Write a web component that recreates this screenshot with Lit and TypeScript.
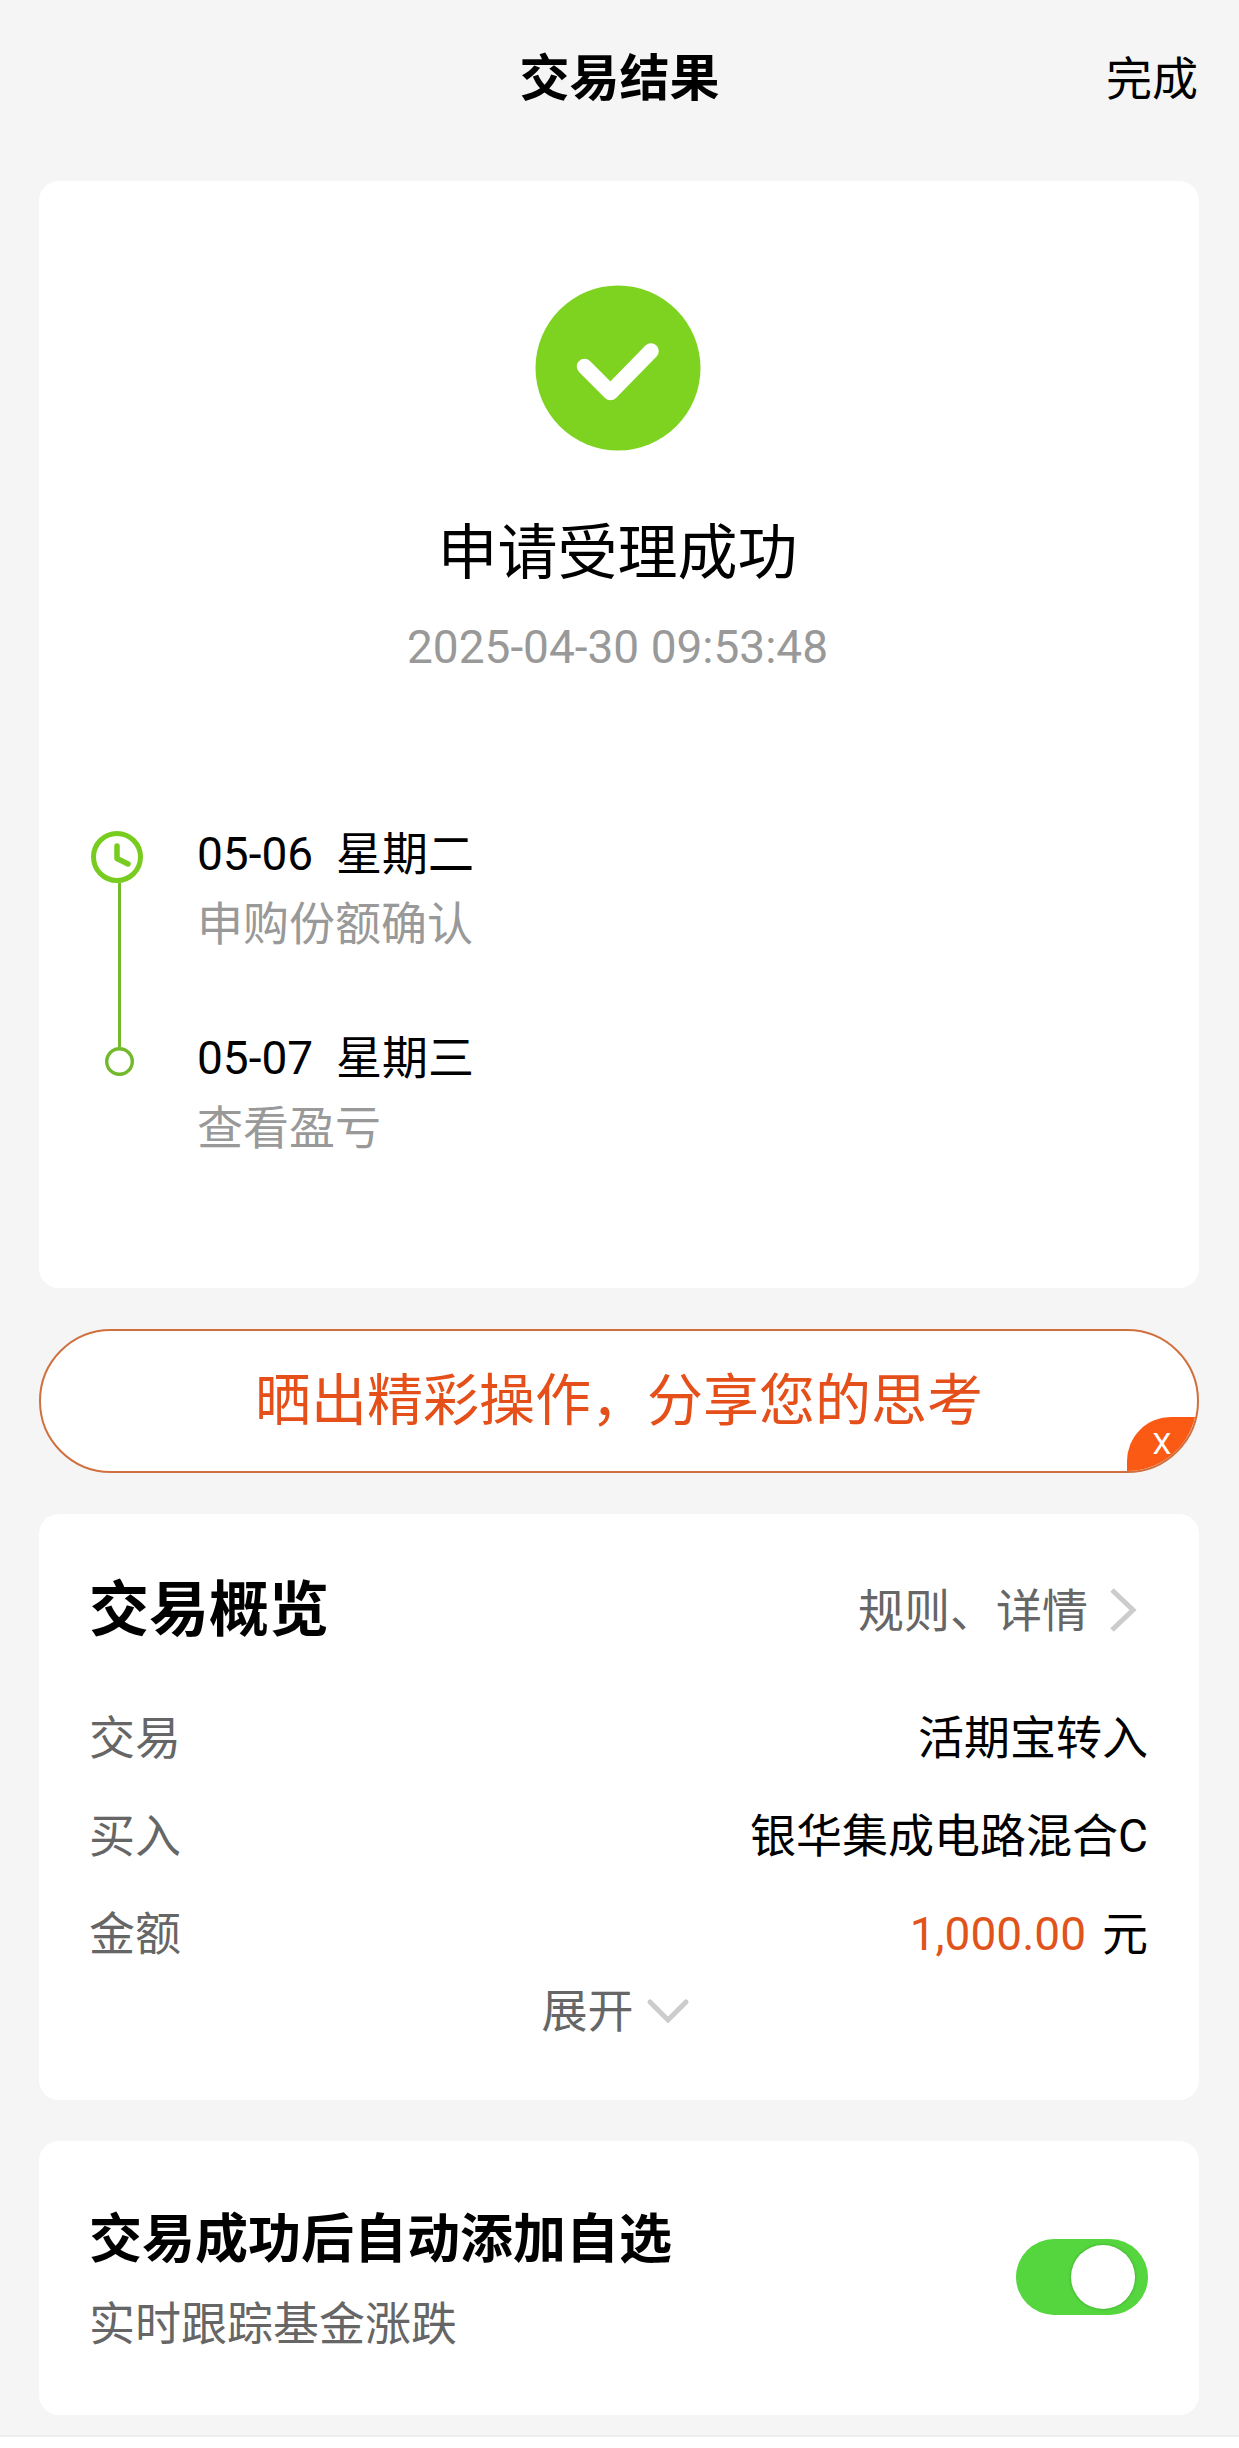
import { LitElement, html, css, svg } from "lit";
import { customElement, state } from "lit/decorators.js";

interface Step {
  date: string;
  weekday: string;
  note: string;
}

const STEPS: Step[] = [
  { date: "05-06", weekday: "星期二", note: "申购份额确认" },
  { date: "05-07", weekday: "星期三", note: "查看盈亏" },
];

@customElement("app-root")
export class AppRoot extends LitElement {
  @state() private autoWatch = true;
  @state() private bannerOpen = true;

  static styles = css`
    :host {
      display: flex;
      flex-direction: column;
      box-sizing: border-box;
      min-height: 100vh;
      background: #f5f5f5;
      color: #000;
      font-family: Roboto, "Noto Sans CJK SC", sans-serif;
      font-size: 46px;
      line-height: 56px;
    }
    * {
      box-sizing: border-box;
    }
    h1,
    h2,
    p,
    ol,
    dl,
    dd {
      margin: 0;
      padding: 0;
    }
    button {
      margin: 0;
      padding: 0;
      border: 0;
      background: none;
      color: inherit;
      font: inherit;
      cursor: pointer;
    }
    svg {
      display: block;
      flex: none;
    }
    .bar {
      display: grid;
      grid-template-columns: 1fr auto 1fr;
      align-items: center;
      padding: 39px 41px 62px;
      line-height: 80px;
    }
    .bar-title {
      grid-column: 2;
      font-size: 50px;
      font-weight: 700;
    }
    .done {
      justify-self: end;
    }
    .content {
      display: flex;
      flex-direction: column;
      gap: 41px;
      padding: 0 40px 20px 39px;
    }
    .card {
      padding: 57px 51px 61px 50px;
      border-radius: 20px;
      background: #fff;
    }
    .result {
      display: flex;
      flex-direction: column;
      align-items: center;
      padding-top: 104px;
      padding-right: 53px;
      padding-bottom: 125px;
    }
    .result-title {
      margin-top: 63px;
      font-size: 60px;
      font-weight: 400;
      line-height: 80px;
    }
    .time {
      margin-top: 25px;
      color: #999;
    }
    .steps {
      align-self: stretch;
      margin-top: 144px;
      list-style: none;
      line-height: 70px;
    }
    .step {
      display: flex;
      gap: 48px;
    }
    .step:not(:last-child) .step-text {
      padding-bottom: 64px;
    }
    .rail {
      display: flex;
      flex: none;
      flex-direction: column;
      align-items: center;
      width: 60px;
    }
    .rail-first {
      padding-top: 12px;
    }
    .line {
      flex: 1;
      width: 3px;
      background: #72b92c;
    }
    .line-lead {
      flex: none;
      height: 24px;
    }
    .step-date {
      white-space: pre;
    }
    .step-note {
      color: #999;
    }
    .banner {
      position: relative;
      overflow: hidden;
      border: 2px solid #d0703f;
      border-radius: 72px;
      background: #fff;
      color: #e5501a;
    }
    .share {
      display: block;
      width: 100%;
      font-size: 56px;
      line-height: 140px;
    }
    .close {
      position: absolute;
      right: 0;
      bottom: 0;
      width: 70px;
      height: 54px;
      border-top-left-radius: 44px;
      background: #fb5a14;
      color: #fff;
      font-size: 30px;
      line-height: 54px;
    }
    .head {
      display: flex;
      align-items: center;
      justify-content: space-between;
      margin-bottom: 38px;
    }
    .head-title {
      font-size: 60px;
      font-weight: 700;
      line-height: 80px;
    }
    .rules {
      display: flex;
      align-items: center;
      gap: 20px;
      color: #666;
      text-decoration: none;
    }
    .row {
      display: flex;
      justify-content: space-between;
      line-height: 98px;
    }
    .label,
    .expand,
    .watch-note {
      color: #666;
    }
    .amount {
      display: flex;
      gap: 16px;
    }
    .figure {
      color: #e0541c;
    }
    .expand {
      display: flex;
      align-items: center;
      gap: 12px;
      margin: 0 auto;
    }
    .watch {
      display: flex;
      align-items: center;
      justify-content: space-between;
      padding-top: 59px;
    }
    .watch-text {
      display: flex;
      flex-direction: column;
      gap: 14px;
      line-height: 60px;
    }
    .watch-title {
      font-size: 53px;
      font-weight: 700;
      line-height: 80px;
    }
    .switch {
      display: flex;
      flex: none;
      align-items: center;
      width: 132px;
      height: 76px;
      margin: 0;
      padding: 0 13px;
      border-radius: 38px;
      background: #ccc;
      appearance: none;
      cursor: pointer;
    }
    .switch::before {
      content: "";
      width: 64px;
      height: 64px;
      border-radius: 50%;
      background: #fff;
      box-shadow: 0 0 3px #3a9a2a;
    }
    .switch:checked {
      justify-content: flex-end;
      background: #55d63e;
    }
    .foot {
      flex: 1;
      min-height: 12px;
      border-top: 2px solid #ededed;
      background: #fff;
    }
  `;

  private renderRail(first: boolean) {
    if (first) {
      return html`<div class="rail rail-first">
        <svg width="60" height="52" viewBox="0 0 60 52" fill="none" stroke="#78cc20" aria-hidden="true">
          ${svg`<circle cx="28" cy="26" r="23.5" stroke-width="5" />
          <path d="M28 15v12.500l11 5.500" stroke-width="5.500" stroke-linecap="round" stroke-linejoin="round" />`}
        </svg>
        <div class="line"></div>
      </div>`;
    }
    return html`<div class="rail">
      <div class="line line-lead"></div>
      <svg width="29" height="29" viewBox="0 0 29 29" fill="none" stroke="#72b92c" aria-hidden="true">
        <circle cx="14.5" cy="14.5" r="12.800" stroke-width="3.400" />
      </svg>
    </div>`;
  }

  private renderBanner() {
    return html`<section class="banner">
      <button class="share" type="button">晒出精彩操作，分享您的思考</button>
      <button class="close" type="button" @click=${() => (this.bannerOpen = false)}>X</button>
    </section>`;
  }

  render() {
    return html`
      <header class="bar">
        <h1 class="bar-title">交易结果</h1>
        <button class="done" type="button">完成</button>
      </header>
      <main class="content">
        <section class="card result">
          <svg width="166" height="166" viewBox="0 0 166 166" aria-hidden="true">
            <circle cx="83" cy="83" r="82.500" fill="#7ed321" />
            <path d="M49.500 81.500L75.500 107.500L116 66" fill="none" stroke="#fff" stroke-width="15.500" stroke-linecap="round" stroke-linejoin="round" />
          </svg>
          <h2 class="result-title">申请受理成功</h2>
          <p class="time">2025-04-30 09:53:48</p>
          <ol class="steps">
            ${STEPS.map(
              (s, i) => html`<li class="step">
                ${this.renderRail(i === 0)}
                <div class="step-text">
                  <p class="step-date">${s.date}  ${s.weekday}</p>
                  <p class="step-note">${s.note}</p>
                </div>
              </li>`
            )}
          </ol>
        </section>

        ${this.bannerOpen ? this.renderBanner() : null}

        <section class="card">
          <div class="head">
            <h2 class="head-title">交易概览</h2>
            <a class="rules" href="#rules">
              规则、详情
              <svg width="40" height="48" viewBox="0 0 40 48" fill="none" stroke="#ccc" stroke-width="5" aria-hidden="true">
                <path d="M4 3L25 23L4 43" />
              </svg>
            </a>
          </div>
          <dl>
            <div class="row">
              <dt class="label">交易</dt>
              <dd>活期宝转入</dd>
            </div>
            <div class="row">
              <dt class="label">买入</dt>
              <dd>银华集成电路混合C</dd>
            </div>
            <div class="row">
              <dt class="label">金额</dt>
              <dd class="amount"><span class="figure">1,000.00</span><span>元</span></dd>
            </div>
          </dl>
          <button class="expand" type="button">
            展开
            <svg width="50" height="28" viewBox="0 0 50 28" fill="none" stroke="#ccc" stroke-width="5" stroke-linecap="round" aria-hidden="true">
              <path d="M4 5L22 23L40 5" />
            </svg>
          </button>
        </section>

        <section class="card watch">
          <label class="watch-text" for="auto-watch">
            <span class="watch-title">交易成功后自动添加自选</span>
            <span class="watch-note">实时跟踪基金涨跌</span>
          </label>
          <input
            id="auto-watch"
            class="switch"
            type="checkbox"
            role="switch"
            .checked=${this.autoWatch}
            @change=${(e: Event) => (this.autoWatch = (e.target as HTMLInputElement).checked)}
          />
        </section>
      </main>
      <footer class="foot"></footer>
    `;
  }
}
